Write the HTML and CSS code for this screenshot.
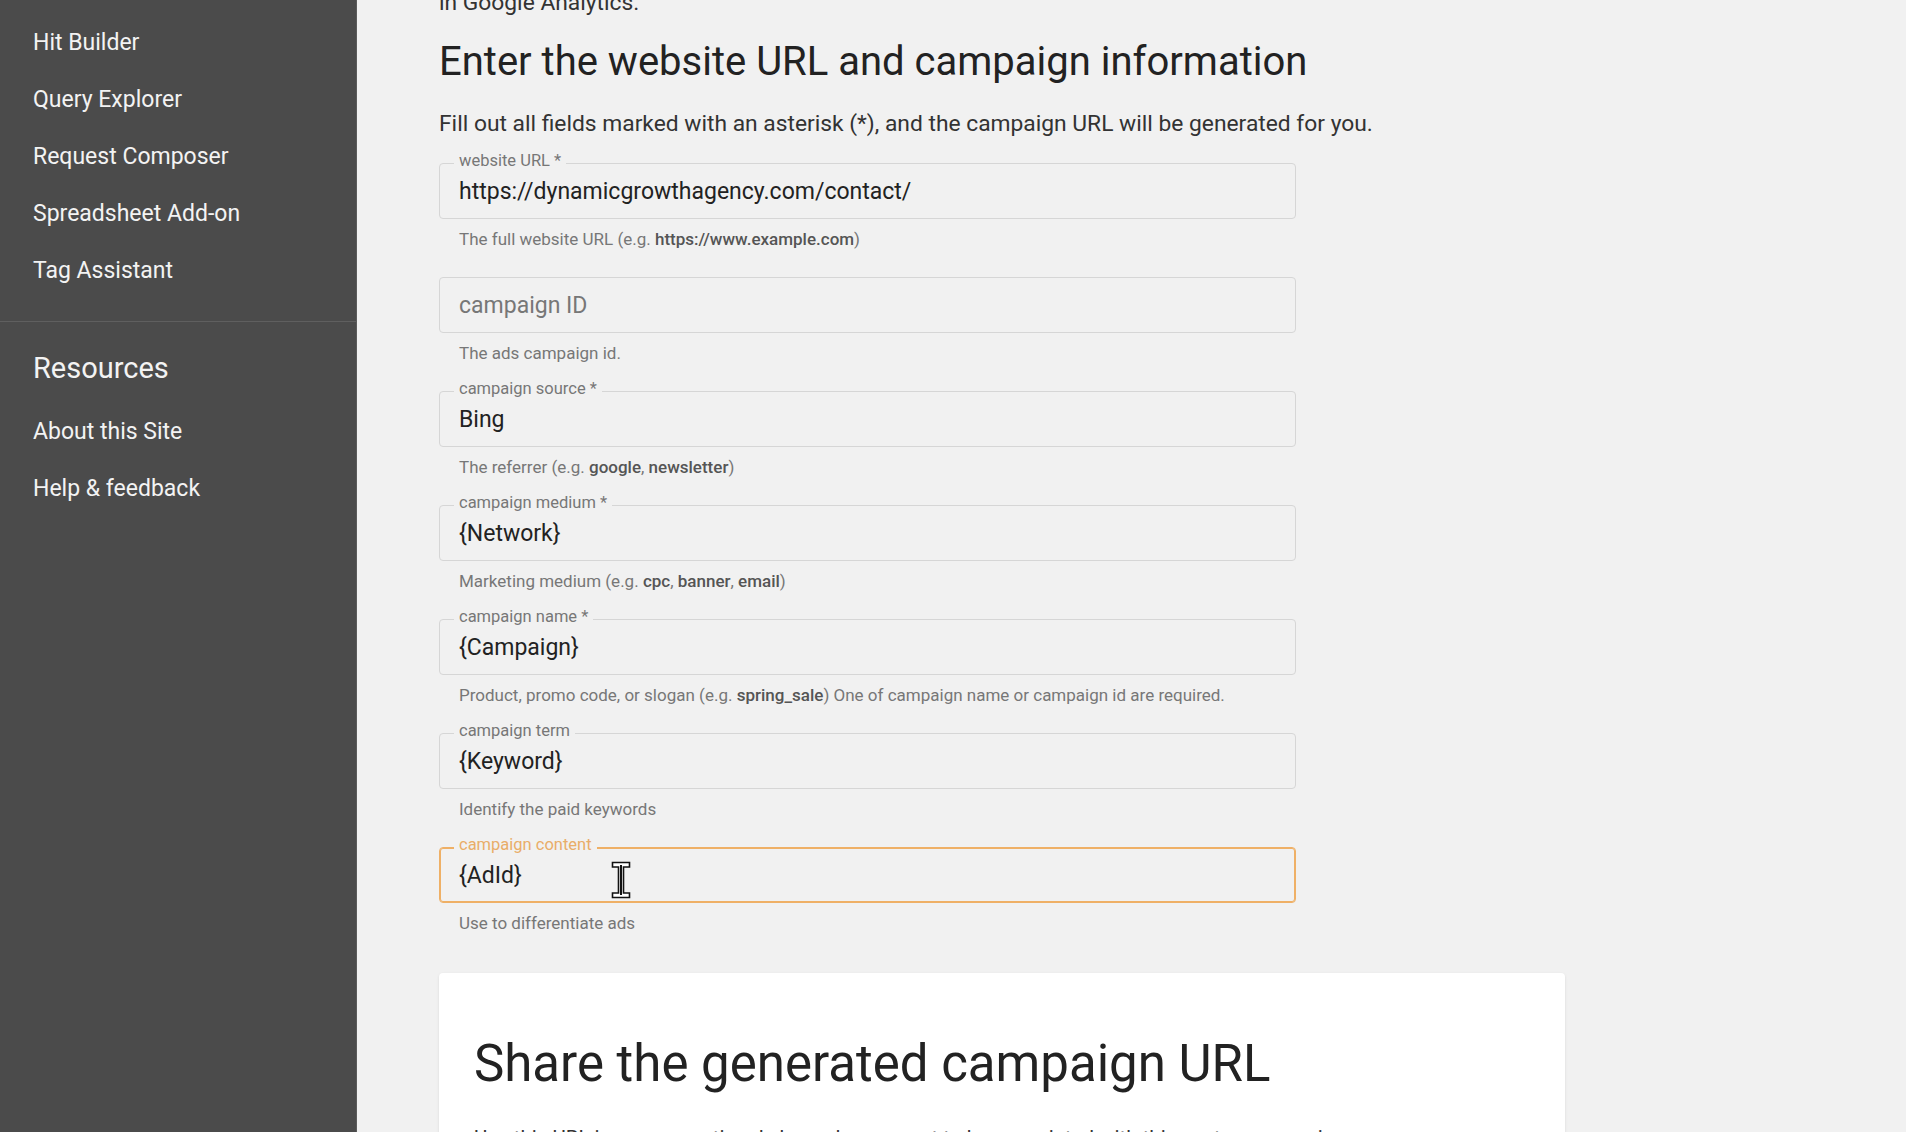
FILE: index.html
```html
<!DOCTYPE html>
<html lang="en">

<head>
  <meta charset="UTF-8" />
  <meta name="viewport" content="width=device-width, initial-scale=1.0" />
  <title>Campaign URL Builder</title>
  <link rel="stylesheet" href="styles.css">
</head>

<body>
  <nav class="sidebar">
    <ul class="nav-list">
      <li>Hit Builder</li>
      <li>Query Explorer</li>
      <li>Request Composer</li>
      <li>Spreadsheet Add-on</li>
      <li>Tag Assistant</li>
    </ul>
    <div class="nav-title">Resources</div>
    <ul class="nav-list plain">
      <li>About this Site</li>
      <li>Help &amp; feedback</li>
    </ul>
  </nav>

  <main class="main">
    <p class="intro">in Google Analytics.</p>
    <h2 class="section-title">Enter the website URL and campaign information</h2>
    <p class="lead">Fill out all fields marked with an asterisk (*), and the campaign URL will be generated for you.</p>

    <form class="form">
      <div class="field">
        <div class="box">
          <label class="label">website URL *</label>
          <input class="input" value="https://dynamicgrowthagency.com/contact/">
        </div>
        <div class="hint">The full website URL (e.g. <b>https://www.example.com</b>)</div>
      </div>

      <div class="field">
        <div class="box">
          <input class="input" placeholder="campaign ID">
        </div>
        <div class="hint">The ads campaign id.</div>
      </div>

      <div class="field">
        <div class="box">
          <label class="label">campaign source *</label>
          <input class="input" value="Bing">
        </div>
        <div class="hint">The referrer (e.g. <b>google</b>, <b>newsletter</b>)</div>
      </div>

      <div class="field">
        <div class="box">
          <label class="label">campaign medium *</label>
          <input class="input" value="{Network}">
        </div>
        <div class="hint">Marketing medium (e.g. <b>cpc</b>, <b>banner</b>, <b>email</b>)</div>
      </div>

      <div class="field">
        <div class="box">
          <label class="label">campaign name *</label>
          <input class="input" value="{Campaign}">
        </div>
        <div class="hint">Product, promo code, or slogan (e.g. <b>spring_sale</b>) One of campaign name or campaign id are required.</div>
      </div>

      <div class="field">
        <div class="box">
          <label class="label">campaign term</label>
          <input class="input" value="{Keyword}">
        </div>
        <div class="hint">Identify the paid keywords</div>
      </div>

      <div class="field">
        <div class="box focused">
          <label class="label">campaign content</label>
          <input class="input" value="{AdId}">
          <!-- mouse cursor -->
          <svg class="ibeam" width="20" height="38" viewBox="0 0 20 38">
            <path d="M1.5 1.5H18.5V6H12.5V32H18.5V36.5H1.5V32H7.5V6H1.5Z" fill="#fff" stroke="#111" stroke-width="1.6" />
            <path d="M10 4V34" stroke="#111" stroke-width="2" />
          </svg>
        </div>
        <div class="hint">Use to differentiate ads</div>
      </div>
    </form>

    <section class="card">
      <h2 class="card-title">Share the generated campaign URL</h2>
      <p class="card-text">Use this URL in any promotional channels you want to be associated with this custom campaign</p>
    </section>
  </main>
</body>

</html>
```

FILE: styles.css
```css
body {
  font-family: Roboto, "Liberation Sans", Arial, sans-serif;
  background-color: #f1f1f1;
  margin: 0;
  padding: 0;
  display: flex;
  height: 100vh;
  overflow: hidden;
}

.sidebar {
  width: 357px;
  flex-shrink: 0;
  background-color: #4b4b4b;
  border-right: 1px solid #5c5c5c;
  color: #f3f3f3;
  box-sizing: border-box;
}

.nav-list {
  list-style: none;
  margin: 0;
  padding: 14px 0 22px;
  border-bottom: 1px solid #5f5f5f;
}

.nav-list li {
  padding-left: 33px;
  font-size: 23px;
  line-height: 57px;
}

.nav-list.plain {
  border-bottom: none;
  padding-top: 17px;
}

.nav-title {
  padding-left: 33px;
  margin-top: 28px;
  font-size: 29px;
  line-height: 36px;
}

.main {
  padding-left: 82px;
  flex: 1;
}

.intro {
  margin: -12px 0 0;
  font-size: 22.8px;
  line-height: 30px;
  color: #333;
}

.section-title {
  margin: 22px 0 0;
  font-size: 40px;
  font-weight: 400;
  line-height: 44px;
  color: #222;
}

.lead {
  margin: 26px 0 0;
  font-size: 22.8px;
  line-height: 28px;
  color: #333;
}

.form {
  margin-top: 25px;
  width: 857px;
}

.field {
  margin-bottom: 26px;
}

.field:last-child {
  margin-bottom: 38px;
}

.box {
  position: relative;
  height: 56px;
  box-sizing: border-box;
  border: 1px solid #d6d6d6;
  border-radius: 4px;
  display: flex;
  align-items: center;
  padding: 0 19px;
}

.box.focused {
  border-color: #efb066;
  box-shadow: inset 0 0 0 1px #efb066;
}

.label {
  position: absolute;
  top: -13px;
  left: 14px;
  padding: 0 5px;
  font-size: 16.5px;
  line-height: 20px;
  color: #777;
  background-color: #f1f1f1;
}

.focused .label {
  color: #e9ad68;
}

.input {
  width: 100%;
  border: none;
  outline: none;
  background: transparent;
  padding: 0;
  font-family: inherit;
  font-size: 23px;
  color: #222;
}

.input::placeholder {
  color: #777;
}

.ibeam {
  position: absolute;
  left: 171px;
  top: 13px;
}

.hint {
  margin-top: 8px;
  padding-left: 20px;
  font-size: 17px;
  line-height: 24px;
  color: #777;
}

.hint b {
  font-weight: 500;
  color: #555;
}

.card {
  width: 1126px;
  box-sizing: border-box;
  background-color: #fff;
  border-radius: 4px;
  box-shadow: 0 1px 3px rgba(0, 0, 0, 0.1);
  padding: 59px 35px 40px;
}

.card-title {
  margin: 0;
  font-size: 51px;
  font-weight: 400;
  line-height: 64px;
  color: #222;
}

.card-text {
  margin: 28px 0 0;
  font-size: 20.5px;
  line-height: 28px;
  color: #333;
}
```
